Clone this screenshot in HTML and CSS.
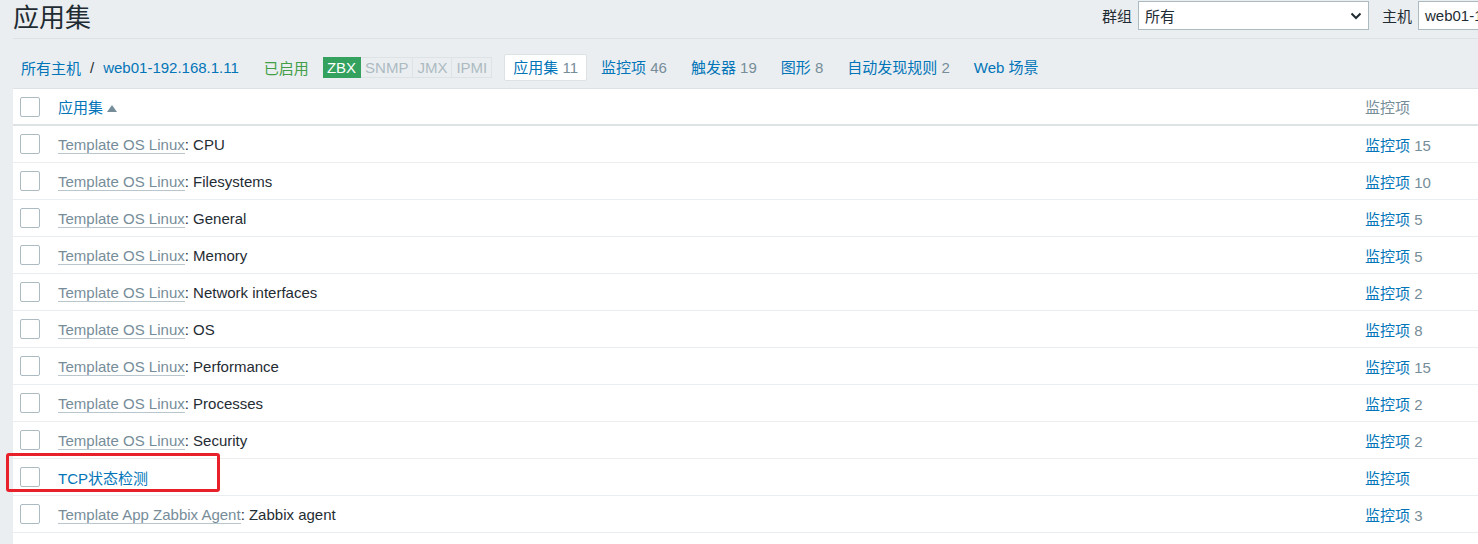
FILE: index.html
```html
<!DOCTYPE html>
<html>
<head>
    <meta charset="utf-8">
    <title>应用集</title>
    <link rel="stylesheet" href="styles.css">
</head>
<body>
<div class="page">
    <div class="header">
        <h1 class="title">应用集</h1>
        <div class="filters">
            <label class="filter-label">群组</label>
            <div class="select">
                <span>所有</span>
                <svg width="12" height="8" viewBox="0 0 12 8"><path d="M1.5 1.5 L6 6 L10.5 1.5" fill="none" stroke="#1f2c33" stroke-width="2"/></svg>
            </div>
            <label class="filter-label">主机</label>
            <div class="select host-input"><span>web01-192.168.1.11</span></div>
        </div>
    </div>

    <div class="host-nav">
        <a class="link" href="#">所有主机</a>
        <span class="sep">/</span>
        <a class="link" href="#">web01-192.168.1.11</a>
        <span class="status-on">已启用</span>
        <div class="tags">
            <span class="tag tag-on">ZBX</span><span class="tag">SNMP</span><span class="tag">JMX</span><span class="tag">IPMI</span>
        </div>
        <ul class="tabs">
            <li class="tab selected"><span class="tab-name">应用集</span> <span class="count">11</span></li>
            <li class="tab"><a class="link" href="#">监控项</a> <span class="count">46</span></li>
            <li class="tab"><a class="link" href="#">触发器</a> <span class="count">19</span></li>
            <li class="tab"><a class="link" href="#">图形</a> <span class="count">8</span></li>
            <li class="tab"><a class="link" href="#">自动发现规则</a> <span class="count">2</span></li>
            <li class="tab"><a class="link" href="#">Web 场景</a></li>
        </ul>
    </div>

    <table class="list">
        <tr class="head">
            <th class="check-col"><span class="checkbox"></span></th>
            <th><a class="link" href="#">应用集</a> <span class="sort-arrow"></span></th>
            <th class="items-col grey">监控项</th>
        </tr>
        <tr>
            <td class="check-col"><span class="checkbox"></span></td>
            <td><a class="link-alt" href="#">Template OS Linux</a>: CPU</td>
            <td class="items-col"><a class="link" href="#">监控项</a> <span class="count">15</span></td>
        </tr>
        <tr>
            <td class="check-col"><span class="checkbox"></span></td>
            <td><a class="link-alt" href="#">Template OS Linux</a>: Filesystems</td>
            <td class="items-col"><a class="link" href="#">监控项</a> <span class="count">10</span></td>
        </tr>
        <tr>
            <td class="check-col"><span class="checkbox"></span></td>
            <td><a class="link-alt" href="#">Template OS Linux</a>: General</td>
            <td class="items-col"><a class="link" href="#">监控项</a> <span class="count">5</span></td>
        </tr>
        <tr>
            <td class="check-col"><span class="checkbox"></span></td>
            <td><a class="link-alt" href="#">Template OS Linux</a>: Memory</td>
            <td class="items-col"><a class="link" href="#">监控项</a> <span class="count">5</span></td>
        </tr>
        <tr>
            <td class="check-col"><span class="checkbox"></span></td>
            <td><a class="link-alt" href="#">Template OS Linux</a>: Network interfaces</td>
            <td class="items-col"><a class="link" href="#">监控项</a> <span class="count">2</span></td>
        </tr>
        <tr>
            <td class="check-col"><span class="checkbox"></span></td>
            <td><a class="link-alt" href="#">Template OS Linux</a>: OS</td>
            <td class="items-col"><a class="link" href="#">监控项</a> <span class="count">8</span></td>
        </tr>
        <tr>
            <td class="check-col"><span class="checkbox"></span></td>
            <td><a class="link-alt" href="#">Template OS Linux</a>: Performance</td>
            <td class="items-col"><a class="link" href="#">监控项</a> <span class="count">15</span></td>
        </tr>
        <tr>
            <td class="check-col"><span class="checkbox"></span></td>
            <td><a class="link-alt" href="#">Template OS Linux</a>: Processes</td>
            <td class="items-col"><a class="link" href="#">监控项</a> <span class="count">2</span></td>
        </tr>
        <tr>
            <td class="check-col"><span class="checkbox"></span></td>
            <td><a class="link-alt" href="#">Template OS Linux</a>: Security</td>
            <td class="items-col"><a class="link" href="#">监控项</a> <span class="count">2</span></td>
        </tr>
        <tr>
            <td class="check-col"><span class="checkbox"></span></td>
            <td><a class="link" href="#">TCP状态检测</a></td>
            <td class="items-col"><a class="link" href="#">监控项</a></td>
        </tr>
        <tr>
            <td class="check-col"><span class="checkbox"></span></td>
            <td><a class="link-alt" href="#">Template App Zabbix Agent</a>: Zabbix agent</td>
            <td class="items-col"><a class="link" href="#">监控项</a> <span class="count">3</span></td>
        </tr>
        <tr class="empty">
            <td class="check-col"></td>
            <td></td>
            <td class="items-col"></td>
        </tr>
    </table>

    <div class="highlight"></div>
</div>
</body>
</html>
```

FILE: styles.css
```css
html, body {
    margin: 0;
    overflow: hidden;
    background-color: #ebeef0;
}
body {
    font-family: "Liberation Sans", Arial, "Noto Sans CJK SC", sans-serif;
    font-size: 15px;
    color: #1f2c33;
}
a {
    text-decoration: none;
}
.page {
    position: relative;
    width: 1635px;
    padding: 0 13px;
}
.header {
    display: flex;
    align-items: flex-start;
    height: 38px;
    border-bottom: 1px solid #dde2e5;
}
.title {
    margin: 0;
    font-size: 26px;
    font-weight: normal;
    line-height: 37px;
}
.filters {
    display: flex;
    align-items: center;
    margin-left: auto;
    padding-top: 1px;
}
.filter-label {
    margin-right: 6px;
    margin-left: 13px;
}
.select {
    display: flex;
    align-items: center;
    justify-content: space-between;
    box-sizing: border-box;
    width: 231px;
    height: 29px;
    padding: 0 6px 0 6px;
    background-color: #fff;
    border: 1px solid #acbbc2;
}
.host-input {
    width: 230px;
}
.host-nav {
    display: flex;
    align-items: center;
    height: 42px;
    padding-top: 7px;
    border-bottom: 1px solid #dde2e5;
    padding-left: 8px;
}
.link {
    color: #0275b8;
}
.sep {
    margin: 0 9px;
}
.status-on {
    color: #429e47;
    margin-left: 25px;
}
.tags {
    display: flex;
    margin-left: 14px;
}
.tag {
    height: 19px;
    line-height: 19px;
    padding: 0 4px;
    color: #acbbc2;
    background-color: #ebeef0;
    border: 1px solid #dde2e5;
    border-left: none;
}
.tag-on {
    color: #fff;
    background-color: #34a15f;
    border-color: #34a15f;
}
.tabs {
    display: flex;
    align-items: center;
    list-style: none;
    margin: 0 0 0 12px;
    padding: 0;
}
.tab {
    padding: 0 8px;
    margin-right: 6px;
    line-height: 25px;
    border: 1px solid transparent;
    border-radius: 2px;
}
.tab.selected {
    background-color: #fff;
    border-color: #dde2e5;
    margin-right: 5px;
}
.tab-name {
    color: #0275b8;
}
.count,
.grey {
    color: #768d99;
}
.list {
    width: 100%;
    border-collapse: collapse;
    background-color: #fff;
}
.list th,
.list td {
    height: 36px;
    padding: 0 7px;
    text-align: left;
    font-weight: normal;
    white-space: nowrap;
    border-bottom: 1px solid #ebeef0;
}
.list .head th {
    height: 35px;
    border-bottom: 2px solid #dde2e5;
}
.list .empty td {
    height: 18px;
}
.check-col {
    width: 24px;
}
.items-col {
    width: 276px;
}
.checkbox {
    display: block;
    box-sizing: border-box;
    width: 20px;
    height: 20px;
    border: 1px solid #acbbc2;
    border-radius: 2px;
    background-color: #fff;
}
.sort-arrow {
    display: inline-block;
    width: 0;
    height: 0;
    border-left: 5px solid transparent;
    border-right: 5px solid transparent;
    border-bottom: 7px solid #768d99;
    vertical-align: 1px;
}
.link-alt {
    color: #768d99;
    border-bottom: 1px solid #b9c6cd;
}
.highlight {
    position: absolute;
    left: 6px;
    top: 453px;
    width: 214px;
    height: 39px;
    box-sizing: border-box;
    border: 3px solid #e8202a;
    border-radius: 3px;
}
```
